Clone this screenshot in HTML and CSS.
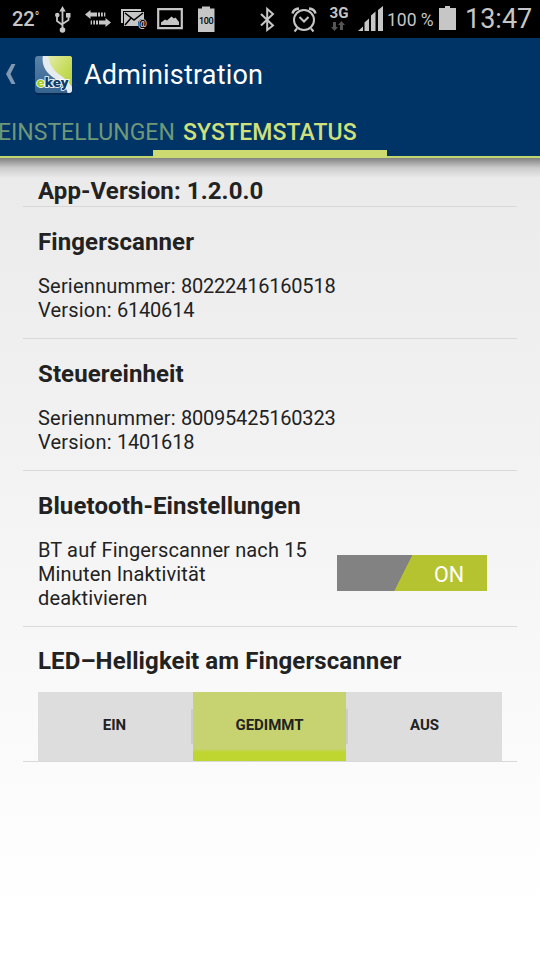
FILE: index.html
```html
<!DOCTYPE html>
<html lang="de">
<head>
    <meta charset="UTF-8">
    <meta name="viewport" content="width=device-width, initial-scale=1.0">
    <title>Administration</title>
    <link rel="stylesheet" href="styles.css">
</head>
<body>
    <!-- Status bar -->
    <div class="statusbar">
        <span class="temp">22<sup>°</sup></span>
        <svg class="usb" width="16" height="38" viewBox="55 0 16 38">
            <path d="M62.5 11v18M57 16v5l5.5 4M68.500 16v4l-6 4" fill="none" stroke="#c6c6c6" stroke-width="1.8"/>
            <path d="M62.500 6l3.200 5.500h-6.400zM66 13h4.500v4.500H66z"/>
            <circle cx="57.300" cy="15" r="2.300"/><circle cx="62.500" cy="30" r="2.800"/>
        </svg>
        <svg class="transfer" width="26" height="38" viewBox="85 0 26 38">
            <path d="M85 14.500l5.500-4.500v2.500H97v4h-6.500V19zM98 12.500h2v4h-2zM101 12.500h1.800v4H101zM104 12.500h1.300v4H104zM111 22.500l-5.500 4.500v-2.500H99v-4h6.500V18zM96 20.500h2v4h-2zM93.300 20.500H95v4h-1.700zM90.700 20.500H92v4h-1.300z"/>
        </svg>
        <svg class="mail" width="27" height="38" viewBox="121 0 27 38">
            <path d="M121 9h20v2h-18v12h-2zM124 12h20v7h-3l-3 3v4h-14z"/>
            <path d="M125 13l9 7 9-7M125 25l6-7" fill="none" stroke="#000" stroke-width="1.500"/>
            <text x="138" y="26.500" font-size="10" font-weight="700">@</text>
        </svg>
        <svg class="photo" width="26" height="38" viewBox="157 0 26 38">
            <path d="M158.200 9.200h23.600v19h-23.600z" fill="none" stroke="#c6c6c6" stroke-width="2.200"/>
            <path d="M161 25v-2.500l4-3 2 1 4.500-4 2.500 2 1.500-1L179 22v3z"/>
        </svg>
        <svg class="level" width="17" height="38" viewBox="198 0 17 38">
            <path d="M198 8.500h4v-2h8v2h4.500V32H198z"/>
            <text x="199" y="23.500" font-size="9" font-weight="500" fill="#000" textLength="14.500">100</text>
        </svg>
        <svg class="bluetooth" width="15" height="38" viewBox="260 0 15 38">
            <path d="M261 14l12 11.500-5.800 4.500V9l5.800 5-12 11.500" fill="none" stroke="#c6c6c6" stroke-width="2"/>
        </svg>
        <svg class="alarm" width="26" height="38" viewBox="291 0 26 38">
            <g fill="none" stroke="#c6c6c6" stroke-width="2">
                <circle cx="304" cy="20" r="10"/>
                <path d="M299.500 17l4.500 4.500 4.500-4.500M297 28.500l-2.500 3M311 28.500l2.500 3"/>
                <path d="M292.500 13.500q1-4.500 6.500-5M315.500 13.500q-1-4.500-6.500-5" stroke-width="2.500"/>
            </g>
        </svg>
        <svg class="network" width="20" height="38" viewBox="329 0 20 38">
            <text x="329.500" y="17.500" font-size="15" font-weight="700" textLength="19" lengthAdjust="spacingAndGlyphs">3G</text>
            <path d="M333 22h3v5h2l-3.500 4-3.500-4h2zM340 30h3v-5h2l-3.500-4-3.500 4h2z" fill="#555"/>
        </svg>
        <svg class="signal" width="25" height="38" viewBox="358 0 25 38">
            <path d="M358 31l5-4.500V31zM364.500 22.500l4.500-4V31h-4.500zM371 15.500l4.500-4V31H371zM378 10l5-4v25h-5z"/>
        </svg>
        <span class="percent">100 %</span>
        <svg class="battery" width="17" height="38" viewBox="439 0 17 38">
            <path d="M439 8h6V6h5v2h6v22h-17z"/>
        </svg>
        <span class="clock">13:47</span>
    </div>

    <!-- Header -->
    <header>
        <div class="title">
            <svg class="back" width="12" height="22" viewBox="0 0 12 22">
                <path d="M6.500 1H10.500L5.500 11l5 10H6.500L1 11z"/>
            </svg>
            <svg class="logo" width="40" height="42" viewBox="0 0 40 42">
                <defs>
                    <linearGradient id="blue" x1="0" y1="0" x2="0" y2="1">
                        <stop offset="0" stop-color="#5b83a9"/>
                        <stop offset="1" stop-color="#34618d"/>
                    </linearGradient>
                    <linearGradient id="green" x1="0" y1="0" x2="1" y2="1">
                        <stop offset="0" stop-color="#e3ecae"/>
                        <stop offset="0.500" stop-color="#c9de62"/>
                        <stop offset="1" stop-color="#b3cd35"/>
                    </linearGradient>
                    <clipPath id="tile"><rect x="1" y="1" width="37" height="37" rx="3"/></clipPath>
                </defs>
                <rect x="1" y="3" width="37" height="37" rx="4" fill="#012850"/>
                <g clip-path="url(#tile)">
                    <path d="M0 0h40v40H0z" fill="url(#blue)"/>
                    <path d="M9 0C7 10 12 18 20 23c8 5 13 9 14 17h6V0z" fill="#e6ebef"/>
                    <path d="M14 0c1 9 5 15 12 20q8 5 13 14V0z" fill="url(#green)"/>
                </g>
                <text class="brand" x="2.500" y="32" textLength="32" lengthAdjust="spacingAndGlyphs"><tspan class="brand-e">e</tspan>key</text>
            </svg>
            <h1>Administration</h1>
        </div>
        <nav>
            <a class="previous" href="#">EINSTELLUNGEN</a>
            <a class="active" href="#">SYSTEMSTATUS</a>
        </nav>
    </header>

    <main>
        <section class="app">
            <h2>App-Version: 1.2.0.0</h2>
        </section>
        <section>
            <h2>Fingerscanner</h2>
            <p><span class="label">Seriennummer: </span><span class="serial">80222416160518</span><br><span class="label">Version: </span><span class="serial">6140614</span></p>
        </section>
        <section>
            <h2>Steuereinheit</h2>
            <p><span class="label">Seriennummer: </span><span class="serial">80095425160323</span><br><span class="label">Version: </span><span class="serial">1401618</span></p>
        </section>
        <section class="bt">
            <h2>Bluetooth-Einstellungen</h2>
            <div class="row">
                <p class="hint">BT auf Fingerscanner nach 15<br>Minuten Inaktivität<br>deaktivieren</p>
                <button class="switch"><span>ON</span></button>
            </div>
        </section>
        <section class="led">
            <h2>LED–Helligkeit am Fingerscanner</h2>
            <div class="levels">
                <button>EIN</button>
                <i class="divider"></i>
                <button class="selected">GEDIMMT</button>
                <i class="divider"></i>
                <button>AUS</button>
            </div>
        </section>
    </main>
</body>
</html>
```
FILE: styles.css
```css
* {
    margin: 0;
    padding: 0;
    box-sizing: border-box;
}

body {
    font-family: Roboto, "Liberation Sans", sans-serif;
    width: 540px;
    height: 960px;
    display: flex;
    flex-direction: column;
    overflow: hidden;
    color: #222;
}

svg {
    display: block;
    flex: none;
}

/* Status bar */
.statusbar {
    height: 38px;
    background: #000;
    color: #c6c6c6;
    fill: #c6c6c6;
    display: flex;
    line-height: 38px;
    white-space: nowrap;
}

.temp {
    width: 28px;
    margin-left: 12px;
    font-size: 20px;
    font-weight: 500;
}

.temp sup {
    font-size: 12px;
    line-height: 0;
    vertical-align: 5px;
}

.usb {
    margin-left: 15px;
}

.transfer {
    margin-left: 14px;
}

.mail {
    margin-left: 10px;
}

.photo {
    margin-left: 9px;
}

.level {
    margin-left: 15px;
}

.bluetooth {
    margin-left: 45px;
}

.alarm {
    margin-left: 16px;
}

.network {
    margin-left: 12px;
}

.signal {
    margin-left: 9px;
}

.percent {
    width: 51px;
    padding: 1px 0 0 4px;
    font-size: 17.5px;
}

.battery {
    margin-left: 5px;
}

.clock {
    margin-left: 9px;
    font-size: 27px;
}

/* Header */
header {
    height: 120px;
    background: #003366;
    border-bottom: 2px solid #c0d66e;
}

.title {
    height: 72px;
    display: flex;
    align-items: center;
    padding-left: 5px;
}

.back {
    fill: #8098b2;
}

.logo {
    margin: 4px 0 0 17px;
}

.brand {
    font-size: 13px;
    font-weight: 900;
    fill: #123b68;
    stroke: #fff;
    stroke-width: 1.5px;
    paint-order: stroke;
}

.brand-e {
    fill: #a9cc20;
}

h1 {
    margin: 2px 0 0 10px;
    font-size: 27px;
    font-weight: 400;
    letter-spacing: 0.2px;
    color: #fff;
}

nav {
    height: 48px;
    display: flex;
    line-height: 46px;
}

nav a {
    text-decoration: none;
    font-size: 23px;
}

.previous {
    width: 153px;
    margin-left: -2px;
    margin-right: 2px;
    color: #6f9878;
    white-space: nowrap;
}

.active {
    width: 234px;
    height: 46px;
    padding-left: 30px;
    background: linear-gradient(#cbdb71, #cbdb71) bottom / 100% 6px no-repeat;
    box-shadow: 0 2px #cbdb71;
    font-weight: 500;
    letter-spacing: 0.1px;
    color: #cfe07c;
}

/* Settings */
main {
    flex: 1;
    padding: 0 23px;
    background: linear-gradient(rgba(0, 0, 0, 0.45), rgba(0, 0, 0, 0.13) 10px, rgba(0, 0, 0, 0) 20px), linear-gradient(#eaeaea, #fff 95%);
}

section {
    height: 132px;
    padding: 19px 15px 0;
    border-bottom: 1px solid #d9d9d9;
}

.app {
    height: 49px;
    padding-top: 17px;
}

.bt {
    height: 156px;
}

.led {
    height: 135px;
    padding-top: 18px;
}

h2 {
    font-size: 24px;
    font-weight: 700;
    line-height: 32px;
    letter-spacing: 0.1px;
    white-space: nowrap;
}

p {
    margin-top: 16px;
    font-size: 20px;
    line-height: 24px;
    white-space: nowrap;
}

.label {
    letter-spacing: 0.2px;
}

.serial {
    letter-spacing: -0.2px;
}

.hint {
    letter-spacing: 0.14px;
}

button {
    border: none;
    font-family: inherit;
}

.row {
    display: flex;
    justify-content: space-between;
}

.switch {
    width: 150px;
    height: 36px;
    margin: 33px 15px 0 0;
    padding: 3px 0 0 74px;
    background: linear-gradient(116.6deg, #828282 44.6%, #b6c330 45.1%);
    font-size: 21.5px;
    color: #fff;
}

.levels {
    display: flex;
    align-items: center;
    height: 69px;
    margin-top: 15px;
    background: #ddd;
}

.levels button {
    width: 153px;
    height: 69px;
    padding-bottom: 4px;
    background: none;
    font-size: 15px;
    font-weight: 700;
    color: #222;
}

.levels .selected {
    background: linear-gradient(#c7d371 57px, #bfd630 60px);
}

.divider {
    width: 2px;
    height: 35px;
    background: #ccc;
}
```
